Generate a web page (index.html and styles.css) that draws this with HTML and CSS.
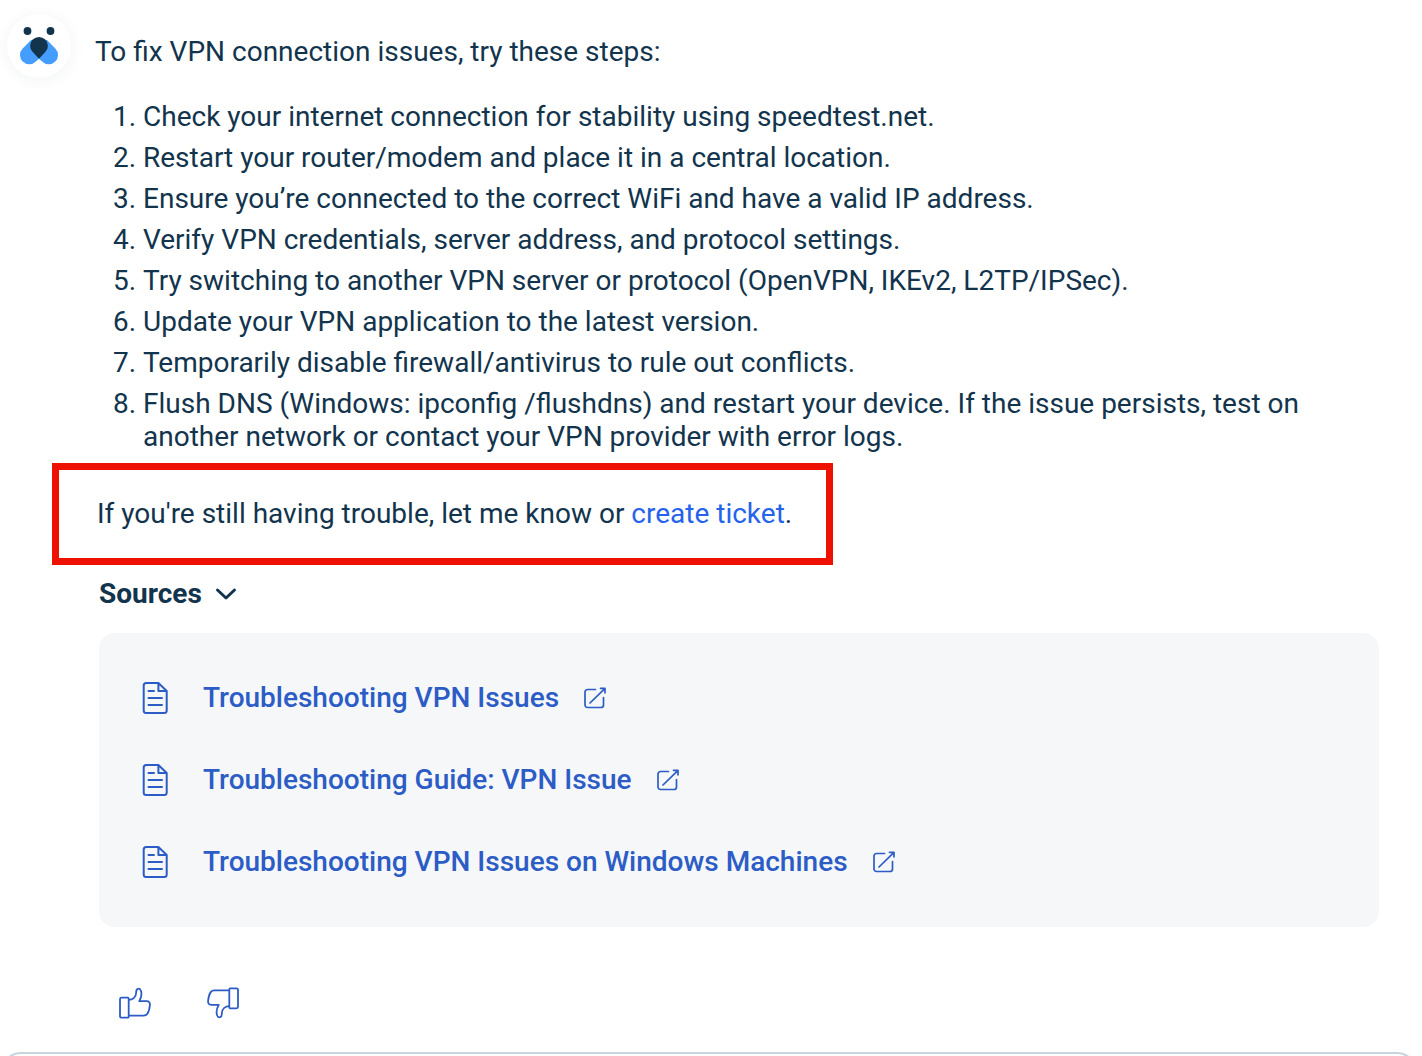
FILE: index.html
```html
<!DOCTYPE html>
<html lang="en">
<head>
  <meta charset="UTF-8">
  <meta name="viewport" content="width=device-width, initial-scale=1.0">
  <title>VPN Assistant</title>
  <link rel="stylesheet" href="styles.css">
</head>
<body>
  <svg class="sprite" width="0" height="0">
    <symbol id="doc" viewBox="0 0 26 34">
      <path d="M4.200 2h12.200l8.300 8v19.500a2.500 2.500 0 0 1-2.500 2.500h-18a2.500 2.500 0 0 1-2.500-2.500v-25A2.500 2.500 0 0 1 4.200 2zM16.400 2v8h8.300M6.500 10h5.500M6.500 17h13.500M6.500 24h13.500"/>
    </symbol>
    <symbol id="external" viewBox="0 0 24 24">
      <path d="M11.500 3.500H3.500A2.500 2.500 0 0 0 1 6v13a2.500 2.500 0 0 0 2.500 2.500h13.500a2.500 2.500 0 0 0 2.500-2.500v-7.500M6 17L21 2.300M16.500 2.300H21v4.500"/>
    </symbol>
    <symbol id="thumb" viewBox="0 0 34 34">
      <path d="M3.500 10.700h6.200a1 1 0 0 1 1 1v18a1 1 0 0 1-1 1H3.500A1.500 1.500 0 0 1 2 29.200v-17a1.500 1.500 0 0 1 1.500-1.500zM10.700 12.900c3.600-.1 7.300-2.200 7.500-7.400C18 1 21.600.800 22.800 3.500c1.300 3.300.6 6.800-1.500 10.600h7.400c2.400 0 3.400 1.600 3.200 3.900-.3 4-1 6.700-2.600 8.900-1 1.300-2 1.800-3.600 1.800h-15"/>
    </symbol>
  </svg>

  <div class="message">
    <div class="avatar">
      <svg width="64" height="64" viewBox="0 0 64 64">
        <circle cx="20.500" cy="17" r="3.900" fill="#12344d"/>
        <circle cx="43.500" cy="17" r="3.900" fill="#12344d"/>
        <path d="M24 26l-8.300 8.400a9.300 9.300 0 0 0 13.200 13.200L32 44.700l3.100 2.900a9.300 9.300 0 0 0 13.200-13.200L40 26z" fill="#459eff"/>
        <path d="M32 44.700l-6.300-6.600a8.900 8.900 0 1 1 12.600 0z" fill="#12344d"/>
      </svg>
    </div>

    <div class="content">
      <p class="intro">To fix VPN connection issues, try these steps:</p>
      <ol class="steps">
        <li>Check your internet connection for stability using speedtest.net.</li>
        <li>Restart your router/modem and place it in a central location.</li>
        <li>Ensure you’re connected to the correct WiFi and have a valid IP address.</li>
        <li>Verify VPN credentials, server address, and protocol settings.</li>
        <li>Try switching to another VPN server or protocol (OpenVPN, IKEv2, L2TP/IPSec).</li>
        <li>Update your VPN application to the latest version.</li>
        <li>Temporarily disable firewall/antivirus to rule out conflicts.</li>
        <li>Flush DNS (Windows: ipconfig /flushdns) and restart your device. If the issue persists, test on another network or contact your VPN provider with error logs.</li>
      </ol>

      <p class="highlight">If you're still having trouble, let me know or <a class="ticket" href="#">create ticket</a>.</p>

      <h2 class="sources-title">Sources
        <svg class="chevron" width="22" height="14" viewBox="0 0 22 14"><path d="M2.500 3L11 11l8.500-8"/></svg>
      </h2>
      <div class="sources">
        <a class="source" href="#">
          <svg class="icon doc"><use href="#doc"/></svg>
          <span>Troubleshooting VPN Issues</span>
          <svg class="icon external"><use href="#external"/></svg>
        </a>
        <a class="source" href="#">
          <svg class="icon doc"><use href="#doc"/></svg>
          <span>Troubleshooting Guide: VPN Issue</span>
          <svg class="icon external"><use href="#external"/></svg>
        </a>
        <a class="source" href="#">
          <svg class="icon doc"><use href="#doc"/></svg>
          <span>Troubleshooting VPN Issues on Windows Machines</span>
          <svg class="icon external"><use href="#external"/></svg>
        </a>
      </div>

      <div class="feedback">
        <button class="thumb-btn" aria-label="Helpful"><svg class="icon thumb"><use href="#thumb"/></svg></button>
        <button class="thumb-btn" aria-label="Not helpful"><svg class="icon thumb down"><use href="#thumb"/></svg></button>
      </div>
    </div>
  </div>

  <div class="reply">
    <div class="reply-box"></div>
  </div>
</body>
</html>
```

FILE: styles.css
```css
* {
  box-sizing: border-box;
}
body {
  margin: 0;
  background: #fff;
  color: #12344d;
  font-family: Roboto, sans-serif;
  font-size: 28px;
  line-height: 33px;
}
p, h2, ol {
  margin: 0;
  padding: 0;
}
a {
  text-decoration: none;
}
.sprite {
  display: block;
}
.message {
  display: flex;
  gap: 24px;
  height: 1052px;
  padding: 14px 43px 0 7px;
}
.avatar {
  flex: none;
  width: 64px;
  height: 64px;
  border-radius: 50%;
  box-shadow: 0 2px 16px rgba(18, 52, 77, 0.06);
}
.avatar svg {
  display: block;
}
.content {
  flex: 1;
  padding-top: 21px;
}
.steps {
  margin-top: 32px;
  padding-left: 48px;
}
.steps li {
  margin-bottom: 8px;
}
.highlight {
  width: 781px;
  height: 102px;
  margin: 10px 0 0 -43.5px;
  padding: 27px 0 0 38.5px;
  border: 7px solid #ee1100;
}
.ticket {
  color: #2563eb;
}
.sources-title {
  display: flex;
  align-items: center;
  gap: 13px;
  margin: 12px 0 0 4px;
  font-size: 28px;
  font-weight: 700;
}
.chevron {
  fill: none;
  stroke: #12344d;
  stroke-width: 3;
  stroke-linecap: round;
  stroke-linejoin: round;
}
.sources {
  display: flex;
  flex-direction: column;
  gap: 48px;
  width: 1280px;
  height: 294px;
  margin: 23px 0 0 4px;
  padding: 48px 43px;
  border-radius: 16px;
  background: #f5f7f9;
}
.source {
  display: flex;
  align-items: center;
  height: 34px;
  color: #2c5cc5;
  font-weight: 500;
}
.source span {
  padding-bottom: 2px;
}
.icon {
  flex: none;
  fill: none;
  stroke: #2c5cc5;
  stroke-width: 2;
  stroke-linecap: round;
  stroke-linejoin: round;
}
.doc {
  width: 26px;
  height: 34px;
  margin-right: 35px;
}
.external {
  width: 24px;
  height: 24px;
  margin-left: 25px;
  stroke-width: 1.7;
}
.feedback {
  display: flex;
  gap: 54px;
  margin: 60px 0 0 23px;
}
.thumb-btn {
  padding: 0;
  border: none;
  background: none;
  cursor: pointer;
}
.thumb {
  display: block;
  width: 34px;
  height: 34px;
  stroke-width: 1.8;
}
.down {
  margin-top: -4px;
  transform: rotate(180deg);
}
.reply {
  height: 4px;
  overflow: hidden;
}
.reply-box {
  height: 60px;
  margin: 0 5px 0 1px;
  border: 2px solid #c9d3dd;
  border-radius: 20px;
}
```
